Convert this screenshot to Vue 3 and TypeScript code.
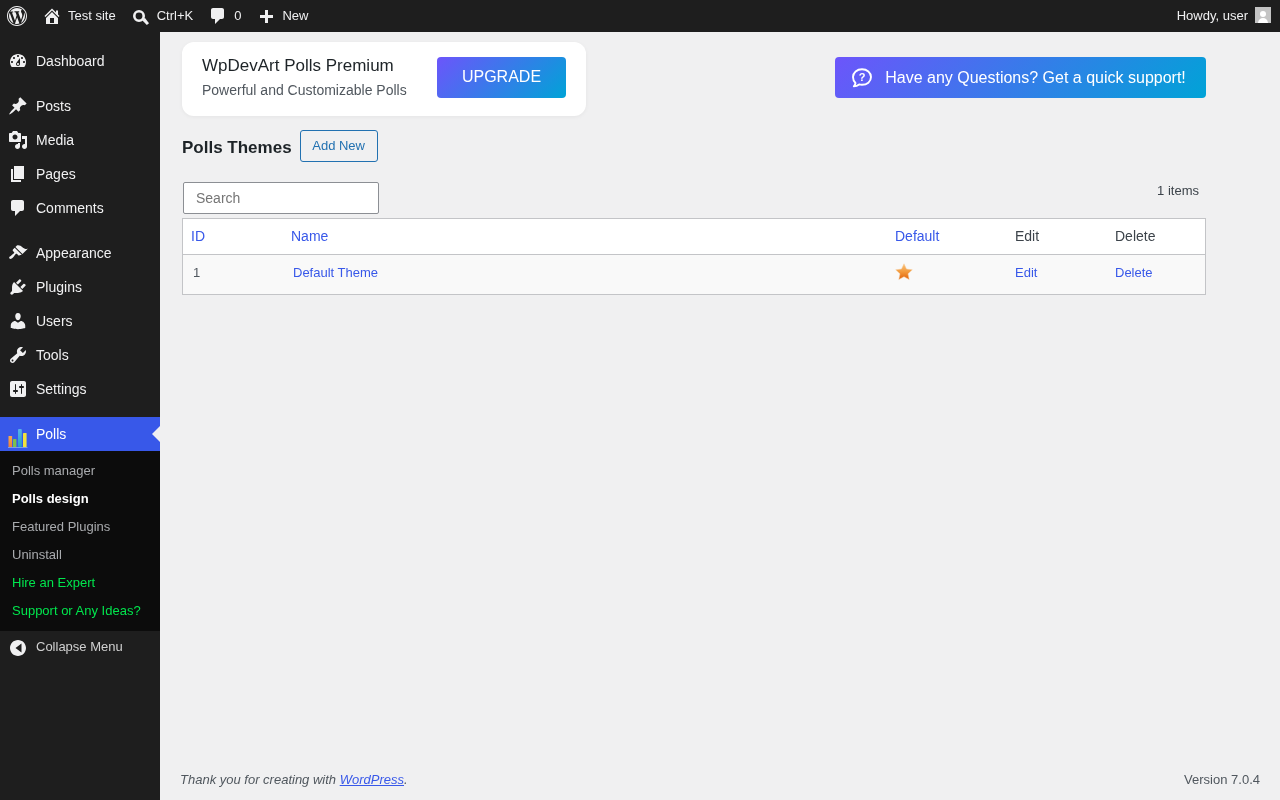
<script setup lang="ts">
interface MenuItem {
  label: string;
  icon: string;
  gap?: boolean;
}

const wpLogo =
  'M20 10c0-5.52-4.48-10-10-10S0 4.48 0 10s4.48 10 10 10 10-4.48 10-10zM10 1.01c4.96 0 8.99 4.03 8.99 8.99s-4.03 8.99-8.99 8.99S1.01 14.96 1.01 10 5.04 1.01 10 1.01zM8.01 14.82L4.96 6.61c.49-.03 1.05-.08 1.05-.08.43-.05.38-1.01-.06-.99 0 0-1.29.1-2.13.1-.15 0-.33 0-.52-.01 1.44-2.17 3.9-3.6 6.7-3.6 2.09 0 3.99.79 5.41 2.09-.6-.1-1.45.22-1.45 1.22 0 .66.38 1.22.79 1.88.31.54.5 1.22.5 2.21 0 1.34-1.27 4.48-1.27 4.48l-2.71-7.5c.48-.03.75-.16.75-.16.43-.05.38-1.1-.05-1.08 0 0-1.3.11-2.14.11-.78 0-2.11-.11-2.11-.11-.43-.02-.48 1.06-.05 1.08l.84.08 1.12 3.04zm6.02 2.15L16.64 10s.67-1.69.39-3.81c.63 1.14.94 2.42.94 3.81 0 2.96-1.56 5.58-3.94 6.97zM2.68 6.77L6.5 17.25c-2.67-1.3-4.47-4.03-4.47-7.25 0-1.18.2-2.25.65-3.23zm7.45 4.53l2.29 6.25c-.75.27-1.57.42-2.42.42-.72 0-1.41-.11-2.06-.3z';
const homeIcon =
  'M16 8.5l1.53 1.53-1.06 1.06L10 4.62l-6.47 6.47-1.06-1.06L10 2.5l4 4v-2h2v4zm-6-2.46l6 5.99V18H4v-5.97zM12 17v-5H8v5h4z';
const commentIcon =
  'M5 2h9c1.1 0 2 .9 2 2v7c0 1.1-.9 2-2 2h-2l-5 5v-5H5c-1.1 0-2-.9-2-2V4c0-1.1.9-2 2-2z';
const plusIcon = 'M17 9v3h-5v5H9v-5H4V9h5V4h3v5h5z';

const menu: MenuItem[] = [
  {
    label: 'Dashboard',
    icon: 'M3.76 16h12.48c1.1-1.37 1.76-3.11 1.76-5 0-4.42-3.58-8-8-8s-8 3.58-8 8c0 1.89.66 3.63 1.76 5zM10 4c.55 0 1 .45 1 1s-.45 1-1 1-1-.45-1-1 .45-1 1-1zM6 6c.55 0 1 .45 1 1s-.45 1-1 1-1-.45-1-1 .45-1 1-1zm8 0c.55 0 1 .45 1 1s-.45 1-1 1-1-.45-1-1 .45-1 1-1zm-5.37 5.55L12 7v6c0 1.1-.9 2-2 2s-2-.9-2-2c0-.57.24-1.08.63-1.45zM4 10c.55 0 1 .45 1 1s-.45 1-1 1-1-.45-1-1 .45-1 1-1zm12 0c.55 0 1 .45 1 1s-.45 1-1 1-1-.45-1-1 .45-1 1-1zm-5 3c0-.55-.45-1-1-1s-1 .45-1 1 .45 1 1 1 1-.45 1-1z',
  },
  {
    label: 'Posts',
    gap: true,
    icon: 'M10.44 3.02l1.82-1.82 6.36 6.35-1.83 1.82c-1.05-.68-2.48-.57-3.41.36l-.75.75c-.92.93-1.04 2.35-.35 3.41l-1.83 1.82-2.41-2.41-2.8 2.79c-.42.42-3.38 2.71-3.8 2.29s1.86-3.39 2.28-3.81l2.79-2.79L4.1 9.36l1.83-1.82c1.05.69 2.48.57 3.4-.36l.75-.75c.93-.92 1.05-2.35.36-3.41z',
  },
  {
    label: 'Media',
    icon: 'M13 11V4c0-.55-.45-1-1-1h-1.67L9 1H5L3.67 3H2c-.55 0-1 .45-1 1v7c0 .55.45 1 1 1h10c.55 0 1-.45 1-1zM7 4.5c1.38 0 2.5 1.12 2.5 2.5S8.38 9.5 7 9.5 4.5 8.38 4.5 7 5.62 4.5 7 4.5zM14 6h5v10.5c0 1.38-1.12 2.5-2.5 2.5S14 17.88 14 16.5s1.12-2.5 2.5-2.5c.17 0 .34.02.5.05V9h-3V6zm-4 8.05V13h2v3.5c0 1.38-1.12 2.5-2.5 2.5S7 17.88 7 16.5 8.12 14 9.5 14c.17 0 .34.02.5.05z',
  },
  { label: 'Pages', icon: 'M6 15V2h10v13H6zm-1 1h8v2H3V5h2v11z' },
  { label: 'Comments', icon: commentIcon },
  {
    label: 'Appearance',
    gap: true,
    icon: 'M14.48 11.06L7.41 3.99l1.5-1.5c.5-.56 2.3-.47 3.51.32 1.21.8 1.43 1.28 2.91 2.1 1.18.64 2.45 1.26 4.45.85zm-.71.71L6.7 4.7 4.93 6.47c-.39.39-.39 1.02 0 1.41l1.06 1.06c.39.39.39 1.03 0 1.42-.6.6-1.43 1.11-2.21 1.69-.35.26-.7.53-1.01.84C1.43 13.23.64 14.66 1.53 15.55c.9.9 2.32.1 3.66-1.24.31-.31.58-.66.84-1.01.58-.78 1.09-1.61 1.69-2.21.39-.39 1.03-.39 1.42 0l1.06 1.06c.39.39 1.02.39 1.41 0z',
  },
  {
    label: 'Plugins',
    icon: 'M13.11 4.36L9.87 7.6 8 5.73l3.24-3.24c.35-.34 1.05-.2 1.56.32.52.51.66 1.21.31 1.55zm-8 1.77l.91-1.12 9.01 9.01-1.19.84c-.71.71-2.63 1.16-3.82 1.16H6.14L4.9 17.26c-.59.59-1.54.59-2.12 0-.59-.58-.59-1.53 0-2.12l1.24-1.24v-3.88c0-1.13.4-3.19 1.09-3.89zm7.26 3.97l3.24-3.24c.34-.35 1.04-.21 1.55.31.52.51.66 1.21.31 1.55l-3.24 3.25z',
  },
  {
    label: 'Users',
    icon: 'M10 9.25c-2.27 0-2.73-3.44-2.73-3.44C7 4.02 7.82 2 9.97 2c2.16 0 2.98 2.02 2.71 3.81 0 0-.41 3.44-2.68 3.44zm0 2.57L12.72 10c2.39 0 4.52 2.33 4.52 4.53v2.49s-3.65 1.13-7.24 1.13c-3.65 0-7.24-1.13-7.24-1.13v-2.49c0-2.25 1.94-4.48 4.47-4.48z',
  },
  {
    label: 'Tools',
    icon: 'M16.68 9.77c-1.34 1.34-3.3 1.67-4.95.99l-5.41 6.52c-.99.99-2.59.99-3.58 0s-.99-2.59 0-3.57l6.52-5.42c-.68-1.65-.35-3.61.99-4.95 1.28-1.28 3.12-1.62 4.72-1.06l-2.89 2.89 2.82 2.82 2.86-2.87c.53 1.58.18 3.39-1.08 4.65zM3.81 16.21c.4.39 1.04.39 1.43 0 .4-.4.4-1.04 0-1.43-.39-.4-1.03-.4-1.43 0-.39.39-.39 1.03 0 1.43z',
  },
  {
    label: 'Settings',
    icon: 'M18 16V4c0-1.1-.9-2-2-2H4c-1.1 0-2 .9-2 2v12c0 1.1.9 2 2 2h12c1.1 0 2-.9 2-2zM8 11h1c.55 0 1 .45 1 1s-.45 1-1 1H8v1.5c0 .28-.22.5-.5.5s-.5-.22-.5-.5V13H6c-.55 0-1-.45-1-1s.45-1 1-1h1V5.5c0-.28.22-.5.5-.5s.5.22.5.5V11zm5-2h-1c-.55 0-1-.45-1-1s.45-1 1-1h1V5.5c0-.28.22-.5.5-.5s.5.22.5.5V7h1c.55 0 1 .45 1 1s-.45 1-1 1h-1v5.5c0 .28-.22.5-.5.5s-.5-.22-.5-.5V9z',
  },
];

const submenu = [
  { label: 'Polls manager', kind: '' },
  { label: 'Polls design', kind: 'current' },
  { label: 'Featured Plugins', kind: '' },
  { label: 'Uninstall', kind: '' },
  { label: 'Hire an Expert', kind: 'green' },
  { label: 'Support or Any Ideas?', kind: 'green' },
];
</script>

<template>
  <div class="page">
    <header class="adminbar">
      <div class="bar-left">
        <svg class="bar-logo" viewBox="0 0 20 20"><path :d="wpLogo" /></svg>
        <span class="bar-item"><svg class="bar-icon" viewBox="0 0 20 20"><path fill-rule="evenodd" :d="homeIcon" /></svg>Test site</span>
        <span class="bar-item">
          <svg class="bar-icon" viewBox="0 0 20 20">
            <circle cx="8" cy="10" r="4.700" fill="none" stroke="#f0f0f1" stroke-width="2.600" />
            <path d="M11.200 14.200l2.600-2.400 4.200 5.400-2.200 1.800z" />
          </svg>Ctrl+K
        </span>
        <span class="bar-item"><svg class="bar-icon" viewBox="0 0 20 20"><path :d="commentIcon" /></svg>0</span>
        <span class="bar-item"><svg class="bar-icon" viewBox="0 0 20 20"><path :d="plusIcon" /></svg>New</span>
      </div>
      <div class="bar-right">
        <span>Howdy, user</span>
        <svg class="avatar" viewBox="0 0 16 16">
          <rect width="16" height="16" fill="#c4c4c4" />
          <circle cx="8" cy="7" r="3" fill="#fff" />
          <path d="M3 16c.3-3.400 2.500-5 5-5s4.700 1.600 5 5z" fill="#fff" />
        </svg>
      </div>
    </header>

    <div class="body-row">
      <aside class="sidebar">
        <nav class="menu">
          <a v-for="item in menu" :key="item.label" class="menu-item" :class="{ 'has-gap': item.gap }">
            <svg class="menu-icon" viewBox="0 0 20 20"><path fill-rule="evenodd" :d="item.icon" /></svg>
            {{ item.label }}
          </a>
          <a class="menu-item polls has-gap">
            <svg class="polls-icon" viewBox="0 0 20 20">
              <defs>
                <linearGradient id="barOrange" x1="0" y1="0" x2="0" y2="1">
                  <stop offset="0" stop-color="#f6a94e" />
                  <stop offset="1" stop-color="#ee7f3a" />
                </linearGradient>
                <linearGradient id="barBlue" x1="0" y1="0" x2="0" y2="1">
                  <stop offset="0" stop-color="#58b4ea" />
                  <stop offset="1" stop-color="#259fc9" />
                </linearGradient>
              </defs>
              <rect x="0.500" y="8" width="3.600" height="11" rx="0.600" fill="url(#barOrange)" />
              <rect x="5" y="11" width="3.400" height="8" rx="0.600" fill="#7cc04b" />
              <rect x="10" y="1" width="3.800" height="18" rx="1" fill="url(#barBlue)" />
              <rect x="15" y="5" width="3.600" height="14" rx="0.600" fill="#f2e23c" />
              <rect x="0" y="19" width="19.500" height="0.800" fill="#8fb0e8" />
            </svg>
            Polls
            <span class="menu-arrow"></span>
          </a>
        </nav>
        <ul class="submenu">
          <li v-for="sub in submenu" :key="sub.label" :class="sub.kind">{{ sub.label }}</li>
        </ul>
        <div class="collapse">
          <svg class="menu-icon collapse-icon" viewBox="0 0 20 20">
            <path fill-rule="evenodd" d="M10 2c4.420 0 8 3.580 8 8s-3.580 8-8 8-8-3.580-8-8 3.580-8 8-8zM13.500 5.500L7.500 10l6 4.500z" />
          </svg>
          Collapse Menu
        </div>
      </aside>

      <main class="content">
        <div class="wrap">
          <div class="promo-row">
            <div class="promo-card">
              <div class="promo-text">
                <div class="promo-title">WpDevArt Polls Premium</div>
                <div class="promo-sub">Powerful and Customizable Polls</div>
              </div>
              <a class="grad-btn upgrade">UPGRADE</a>
            </div>
            <a class="grad-btn support">
              <svg class="support-icon" viewBox="0 0 22 22" fill="none">
                <path d="M11 2.200c5 0 9 3.300 9 7.900s-4 7.700-9 7.700c-1 0-2-.1-2.900-.4-1.500 1.200-3.300 1.800-5.300 1.900.9-.9 1.500-2 1.700-3.300C2.900 14.600 2 12.500 2 10.100 2 5.500 6 2.200 11 2.200z" stroke="#fff" stroke-width="1.900" stroke-linejoin="round" />
                <text x="11" y="14" text-anchor="middle" class="support-q">?</text>
              </svg>
              Have any Questions? Get a quick support!
            </a>
          </div>

          <div class="title-row">
            <h1>Polls Themes</h1>
            <a class="add-new">Add New</a>
          </div>

          <div class="tools-row">
            <input class="search" type="text" placeholder="Search" />
            <span class="count">1 items</span>
          </div>

          <table class="themes">
            <colgroup>
              <col class="col-id" />
              <col class="col-name" />
              <col class="col-default" />
              <col class="col-edit" />
              <col />
            </colgroup>
            <thead>
              <tr>
                <th><a>ID</a></th>
                <th><a>Name</a></th>
                <th><a>Default</a></th>
                <th>Edit</th>
                <th>Delete</th>
              </tr>
            </thead>
            <tbody>
              <tr>
                <td class="indent">1</td>
                <td class="indent"><a>Default Theme</a></td>
                <td>
                  <svg class="star" viewBox="0 0 18 18">
                    <defs>
                      <linearGradient id="starFill" x1="0" y1="0" x2="0" y2="1">
                        <stop offset="0" stop-color="#f9c27c" />
                        <stop offset="0.500" stop-color="#f39a3c" />
                        <stop offset="1" stop-color="#e2620a" />
                      </linearGradient>
                    </defs>
                    <path d="M9 .8l2.500 5.300 5.800.7-4.300 4 1.200 5.700L9 13.700l-5.200 2.800L5 10.800.7 6.800l5.800-.7z" fill="url(#starFill)" stroke="#f7cfa0" stroke-width="0.500" />
                  </svg>
                </td>
                <td><a>Edit</a></td>
                <td><a>Delete</a></td>
              </tr>
            </tbody>
          </table>
        </div>

        <footer class="footer">
          <span class="thanks">Thank you for creating with <a>WordPress</a>.</span>
          <span>Version 7.0.4</span>
        </footer>
      </main>
    </div>
  </div>
</template>

<style>
html,
body {
  margin: 0;
  background: #f0f0f1;
}
</style>

<style scoped>
.page {
  display: flex;
  flex-direction: column;
  height: 800px;
  font-family: "Liberation Sans", Arial, sans-serif;
  color: #3c434a;
  font-size: 13px;
  overflow: hidden;
  will-change: transform;
}

.adminbar {
  display: flex;
  justify-content: space-between;
  align-items: center;
  height: 32px;
  box-sizing: border-box;
  padding-bottom: 2px;
  flex: none;
  background: #1e1e1e;
  color: #f0f0f1;
}

.bar-left {
  display: flex;
  align-items: center;
  padding-left: 7px;
}

.bar-logo {
  width: 20px;
  height: 20px;
  fill: #f0f0f1;
  margin: 2px 15px 0 0;
}

.bar-item {
  display: flex;
  align-items: center;
  margin-right: 15px;
}

.bar-icon {
  width: 20px;
  height: 20px;
  fill: #f0f0f1;
  margin: 2px 6px 0 0;
}

.bar-right {
  display: flex;
  align-items: center;
  gap: 7px;
  padding-right: 9px;
}

.avatar {
  width: 16px;
  height: 16px;
}

.body-row {
  display: flex;
  flex: 1;
  min-height: 0;
}

.sidebar {
  width: 160px;
  flex: none;
  background: #1e1e1e;
  padding-top: 12px;
  box-sizing: border-box;
}

.menu-item {
  position: relative;
  display: flex;
  align-items: center;
  height: 34px;
  color: #f0f0f1;
  font-size: 14px;
}

.menu-item.has-gap {
  margin-top: 11px;
}

.menu-icon {
  width: 20px;
  height: 20px;
  fill: #f0f0f1;
  margin: 0 8px;
  flex: none;
}

.polls {
  background: #3858e9;
  color: #fff;
}

.polls-icon {
  width: 20px;
  height: 20px;
  margin: 8px 8px 0;
  flex: none;
}

.menu-arrow {
  position: absolute;
  right: 0;
  top: 9px;
  border: 8px solid transparent;
  border-right-color: #f0f0f1;
  border-left-width: 0;
}

.submenu {
  margin: 0;
  padding: 6px 0;
  list-style: none;
  background: #0c0c0c;
  font-size: 13px;
  color: #a9abae;
}

.submenu li {
  height: 28px;
  line-height: 28px;
  padding-left: 12px;
}

.submenu .current {
  color: #fff;
  font-weight: 600;
}

.submenu .green {
  color: #00e64d;
}

.collapse {
  display: flex;
  align-items: center;
  height: 30px;
  color: #d0d0d0;
  font-size: 13px;
}

.collapse-icon {
  margin-top: 4px;
}

.content {
  flex: 1;
  display: flex;
  flex-direction: column;
  min-width: 0;
}

.wrap {
  flex: 1;
  width: 1024px;
  margin-left: 22px;
}

.promo-row {
  display: flex;
  justify-content: space-between;
  align-items: center;
  margin-top: 10px;
}

.promo-card {
  display: flex;
  align-items: center;
  width: 404px;
  height: 74px;
  box-sizing: border-box;
  padding: 0 20px 4px;
  justify-content: space-between;
  background: #fff;
  border-radius: 12px;
  box-shadow: 0 1px 4px rgba(0, 0, 0, 0.05);
}

.promo-text {
  padding-bottom: 1px;
}

.promo-title {
  font-size: 17px;
  line-height: 24px;
  color: #1d2327;
  margin-bottom: 2px;
}

.promo-sub {
  font-size: 14px;
  line-height: 20px;
  color: #50575e;
}

.grad-btn {
  display: flex;
  align-items: center;
  justify-content: center;
  height: 41px;
  box-sizing: border-box;
  border-radius: 4px;
  background: linear-gradient(135deg, #6c55fb, #00a3d7);
  color: #fff;
  font-size: 16px;
}

.upgrade {
  width: 129px;
}

.support {
  width: 371px;
  gap: 12px;
  padding: 1px 4px 0 0;
  margin-bottom: 4px;
}

.support-icon {
  width: 22px;
  height: 22px;
}

.support-q {
  fill: #fff;
  font-size: 11px;
  font-weight: 700;
  font-family: "Liberation Sans", Arial, sans-serif;
}

.title-row {
  display: flex;
  align-items: center;
  gap: 8px;
  margin-top: 14px;
  height: 32px;
}

.title-row h1 {
  margin: 4px 0 0;
  font-size: 17px;
  font-weight: 600;
  color: #1d2327;
}

.add-new {
  display: flex;
  align-items: center;
  justify-content: center;
  width: 78px;
  height: 32px;
  box-sizing: border-box;
  padding-bottom: 2px;
  border: 1px solid #2271b1;
  border-radius: 3px;
  color: #2271b1;
  font-size: 13px;
}

.tools-row {
  display: flex;
  justify-content: space-between;
  align-items: flex-start;
  margin-top: 20px;
  height: 36px;
}

.search {
  width: 196px;
  height: 32px;
  margin-left: 1px;
  box-sizing: border-box;
  padding: 0 12px;
  border: 1px solid #8c8f94;
  border-radius: 2px;
  background: #fff;
  font-family: inherit;
  font-size: 14px;
  color: #2c3338;
}

.search::placeholder {
  color: #757575;
  opacity: 1;
}

.count {
  margin: 1px 7px 0 0;
  line-height: 16px;
}

.themes {
  width: 1024px;
  table-layout: fixed;
  border-collapse: separate;
  border-spacing: 0;
  border: 1px solid #c3c4c7;
  background: #fff;
}

.col-id {
  width: 100px;
}

.col-name {
  width: 604px;
}

.col-default {
  width: 120px;
}

.col-edit {
  width: 100px;
}

.themes th {
  height: 36px;
  padding: 0 8px 1px;
  box-sizing: border-box;
  text-align: left;
  font-weight: 400;
  font-size: 14px;
  border-bottom: 1px solid #c3c4c7;
  color: #3c434a;
}

.themes a {
  color: #3858e9;
}

.themes td {
  height: 39px;
  padding: 0 8px 4px;
  box-sizing: border-box;
  background: #f9f9f9;
  color: #50575e;
  font-size: 13px;
  vertical-align: middle;
}

.themes td.indent {
  padding-left: 10px;
}

.star {
  display: block;
  width: 18px;
  height: 18px;
  margin-top: -2px;
}

.footer {
  display: flex;
  justify-content: space-between;
  align-items: center;
  padding: 0 20px;
  height: 42px;
  margin-top: -14px;
  color: #50575e;
  font-size: 13px;
}

.thanks {
  font-style: italic;
}

.thanks a {
  color: #3858e9;
  text-decoration: underline;
}
</style>
